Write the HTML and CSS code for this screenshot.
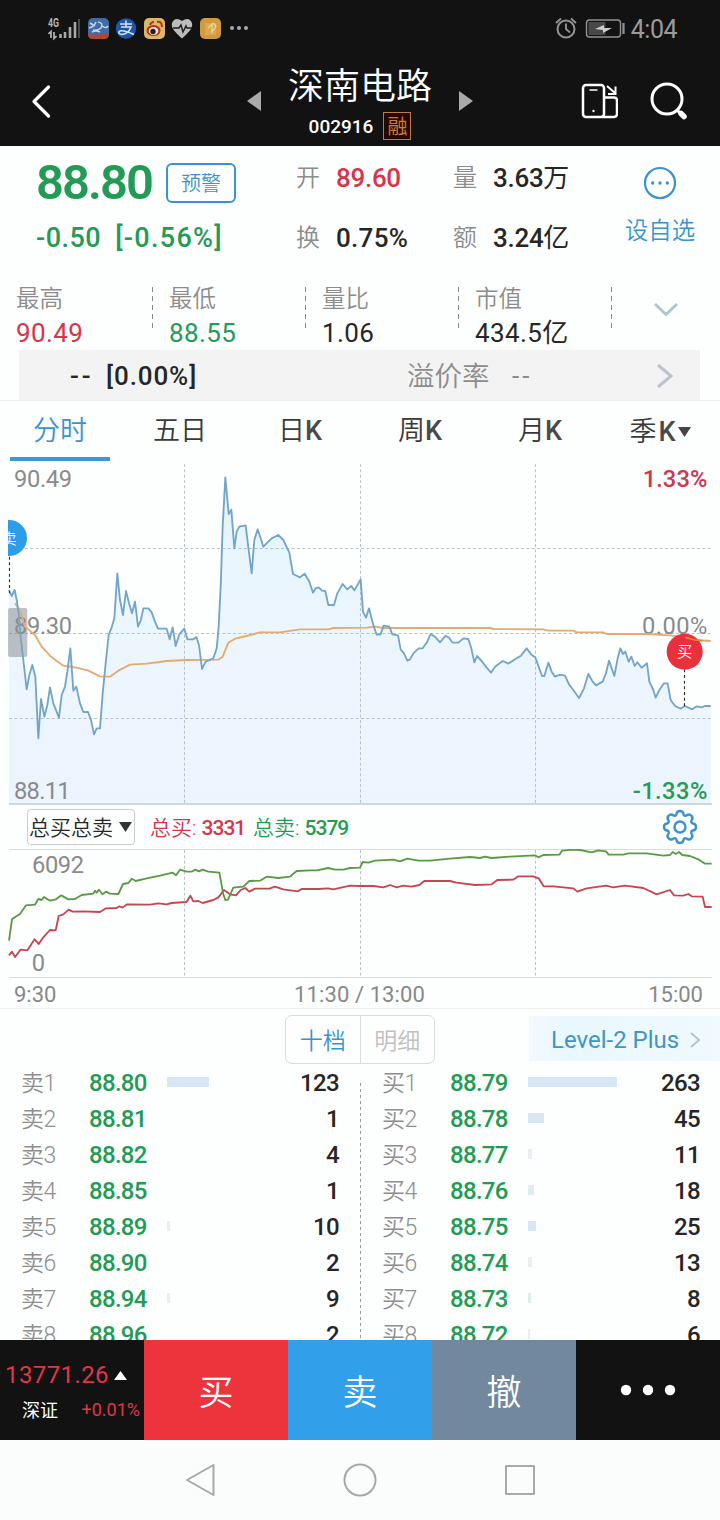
FILE: index.html
```html
<!DOCTYPE html>
<html lang="zh-CN">
<head>
<meta charset="utf-8">
<title>深南电路 002916</title>
<link rel="stylesheet" href="styles.css">
</head>
<body>
<div class="phone">
  <header class="top">
    <div class="status">
      <svg class="status-icons" width="210" height="26" viewBox="0 0 210 26">
        <text x="0" y="9" class="net" textLength="11" lengthAdjust="spacingAndGlyphs">4G</text>
        <path d="M3 20v-6.500l-2.500 2.500M6 14v6.500l2.500-2.500" fill="none" stroke="#b5b5b5" stroke-width="1.700"/>
        <path d="M12.500 20v-4M17 20v-6M22 20v-11M27 20V4" stroke="#a8a8a8" stroke-width="2.600"/>
        <path d="M31 20V1" stroke="#4b4b4b" stroke-width="2"/>
        <rect x="40" y="0" width="21" height="21" rx="5" fill="#416da6"/>
        <path d="M40 16q10 2 21-1v1q0 5-5 5H45q-5 0-5-5z" fill="#b4472f"/>
        <path d="M42 5l5 3M41 10q5-1 7-6M44 14q4-2 8 0M50 4q6 1 3 6q-3 3-8 2M54 8q4 3 6 0" fill="none" stroke="#c3d5e8" stroke-width="1.500"/>
        <circle cx="78" cy="10.500" r="10.200" fill="#1d58a8"/>
        <path d="M72 6h12M78 2.500v6M73 9h10q-3 7.500-9.500 7.500q-3.500-1-2.500-3q3-2.500 15 3" fill="none" stroke="#d5e0ee" stroke-width="1.600"/>
        <rect x="96" y="0" width="21" height="21" rx="5" fill="#dcb766"/>
        <ellipse cx="105.500" cy="12.500" rx="7" ry="5.500" fill="#b33420"/>
        <ellipse cx="105.500" cy="13" rx="4.800" ry="4" fill="#f0e6d8"/>
        <circle cx="105" cy="13.500" r="2.700" fill="#222"/>
        <path d="M109 4q5-1 5 5M102 7q1-3 4-3" fill="none" stroke="#b33420" stroke-width="2"/>
        <path d="M134 20.500C126 13 123 10 124 5q3-7 10-2q7-5 10 2c1 5-2 8-10 15.500z" fill="#bcbcbc"/>
        <path d="M125 10h6l2-3 2 7 3-6 1 2h5" fill="none" stroke="#202020" stroke-width="1.500"/>
        <rect x="152" y="0" width="21" height="21" rx="5" fill="#d09a3e"/>
        <path d="M157 5h11v12h-11z" fill="#dba94f"/>
        <path d="M160 10l4-4v9M165 5l3 3-3 5" fill="none" stroke="#efd59c" stroke-width="1.300"/>
        <g fill="#aaa"><circle cx="184" cy="10" r="2"/><circle cx="191" cy="10" r="2"/><circle cx="198" cy="10" r="2"/></g>
      </svg>
      <div class="status-right">
        <svg width="72" height="26" viewBox="0 0 72 26" fill="none" stroke="#929292">
          <circle cx="12" cy="13" r="8.500" stroke-width="2"/>
          <path d="M12 7.500V13l4 3.500M2 7l5-4.500M17 2.500L22 7" stroke-width="1.900"/>
          <rect x="32.500" y="4" width="34" height="17" rx="3" stroke-width="1.400"/>
          <rect x="34.500" y="6" width="17" height="13" fill="#484848" stroke="none"/>
          <path d="M41 13l9-4v3h8l-9 5v-3z" fill="#ccc" stroke="none"/>
          <path d="M69.500 7v11" stroke-width="2.200"/>
        </svg>
        <span class="clock">4:04</span>
      </div>
    </div>
    <div class="titlebar">
      <svg class="back" width="24" height="38" viewBox="0 0 24 38"><path d="M19.500 5L5 19.500l14.500 14.500" fill="none" stroke="#fff" stroke-width="3.200" stroke-linecap="round" stroke-linejoin="round"/></svg>
      <svg class="prev" width="15" height="22" viewBox="0 0 15 22"><path d="M0 11L14 1v20z" fill="#aaa"/></svg>
      <div class="name">
        <h1>深南电路</h1>
        <div class="code"><span>002916</span><b>融</b></div>
      </div>
      <svg class="next" width="15" height="22" viewBox="0 0 15 22"><path d="M15 11L1 1v20z" fill="#aaa"/></svg>
      <svg class="rotate" width="38" height="38" viewBox="0 0 38 38" fill="none" stroke="#fff" stroke-width="2.500">
        <rect x="3" y="3" width="21" height="32" rx="3"/>
        <path d="M24 15.500h10q3 0 3 3v13.500q0 3-3 3H22"/>
        <path d="M27 4l8 7M35.500 4.500V12h-7.500" stroke-width="2"/>
        <path d="M9.500 8h8" stroke-width="1.500"/><circle cx="13.500" cy="29" r="1.200" fill="#fff" stroke="none"/>
      </svg>
      <svg class="search" width="38" height="40" viewBox="0 0 38 40" fill="none" stroke="#fff"><circle cx="17" cy="18" r="15" stroke-width="3"/><path d="M27 29l3 3" stroke-width="3"/><path d="M31 32.500l3 3" stroke-width="5.500" stroke-linecap="round"/></svg>
    </div>
  </header>

  <section class="quote">
    <div class="main">
      <div class="left">
        <div class="price-row"><span class="price">88.80</span><span class="alert">预警</span></div>
        <div class="change"><span>-0.50</span><span>[-0.56%]</span></div>
      </div>
      <dl class="pairs">
        <dt>开</dt><dd class="red">89.60</dd><dt>量</dt><dd>3.63<i>万</i></dd>
        <dt>换</dt><dd class="wide">0.75%</dd><dt>额</dt><dd>3.24<i>亿</i></dd>
      </dl>
      <div class="fav">
        <svg width="34" height="34" viewBox="0 0 34 34"><circle cx="17" cy="17" r="15" fill="none" stroke="#3b93ce" stroke-width="2.200"/><g fill="#3b93ce"><circle cx="9.700" cy="17" r="1.700"/><circle cx="17" cy="17" r="1.700"/><circle cx="24.300" cy="17" r="1.700"/></g></svg>
        <span>设自选</span>
      </div>
    </div>
    <div class="stats">
      <div class="stat"><span>最高</span><b class="red">90.49</b></div>
      <div class="stat"><span>最低</span><b class="green">88.55</b></div>
      <div class="stat"><span>量比</span><b>1.06</b></div>
      <div class="stat"><span>市值</span><b>434.5亿</b></div>
      <svg class="expand" width="26" height="16" viewBox="0 0 26 16"><path d="M2 2l11 10.500L24 2" fill="none" stroke="#b5c3cc" stroke-width="3"/></svg>
    </div>
    <div class="premium">
      <span class="dash">--</span><span class="pct">[0.00%]</span><span class="lab">溢价率</span><span class="none">--</span>
      <svg width="18" height="28" viewBox="0 0 18 28"><path d="M2 3l13 11L2 25" fill="none" stroke="#bec2d0" stroke-width="3"/></svg>
    </div>
  </section>

  <nav class="tabs">
    <span class="on">分时</span><span>五日</span><span>日<b>K</b></span><span>周<b>K</b></span><span>月<b>K</b></span>
    <span class="drop">季<b>K</b><svg width="13" height="10" viewBox="0 0 13 10"><path d="M0 0h13L6.500 10z" fill="#454545"/></svg></span>
  </nav>

  <svg class="chart" width="720" height="347" viewBox="0 183 2160 1041">
    <defs><linearGradient id="area" x1="0" y1="0" x2="0" y2="1"><stop offset="0" stop-color="#e2f5fd"/><stop offset=".5" stop-color="#edf6fd"/><stop offset="1" stop-color="#ecf5fd"/></linearGradient></defs>
    <path fill="url(#area)" d="M27 1211L27,570 35,588 44,570 50,600 56,640 62,710 70,780 80,868 88,825 97,795 106,830 115,1015 123,897 133,950 142,915 150,862 160,910 177,953 185,885 195,860 202,815 211,745 220,872 229,860 240,910 250,936 264,936 273,960 282,1003 290,985 300,985 308,880 317,790 326,705 335,682 343,655 352,520 360,600 369,645 378,573 387,610 396,640 405,605 414,680 422,662 430,625 445,625 455,637 465,665 474,686 500,686 509,718 518,682 527,738 538,703 553,686 562,718 580,718 589,711 597,735 606,807 617,785 640,775 650,745 656,680 662,560 668,380 676,232 686,342 694,329 703,445 710,395 718,380 737,376 746,450 755,520 763,420 773,388 782,415 790,440 815,415 835,405 850,420 868,458 879,522 900,532 914,521 928,545 939,578 947,565 956,562 966,572 976,573 985,615 1002,615 1012,580 1028,552 1042,568 1054,558 1063,571 1082,538 1089,635 1098,653 1107,625 1120,675 1130,704 1141,704 1151,677 1168,680 1177,703 1194,706 1202,748 1212,760 1222,782 1230,778 1240,760 1256,745 1268,745 1282,725 1292,702 1305,710 1320,727 1337,707 1348,714 1358,728 1375,728 1390,715 1405,717 1414,745 1423,787 1431,768 1445,783 1460,803 1473,818 1485,800 1508,783 1525,791 1545,778 1563,767 1580,745 1595,765 1606,772 1626,828 1633,828 1645,788 1655,815 1665,830 1680,824 1695,827 1707,853 1720,870 1737,894 1752,865 1765,822 1778,845 1788,856 1808,845 1818,820 1827,782 1843,828 1853,775 1861,745 1869,762 1876,755 1886,785 1894,770 1904,798 1912,787 1925,803 1941,790 1948,845 1960,870 1967,893 1978,870 1992,850 2003,850 2012,900 2025,918 2042,926 2054,918 2077,928 2090,919 2105,922 2115,918 2132,918L2132 1211z"/>
    <path d="M27 445.500H2136M27 700.500H2136M27 955.500H2136M553.500 192V1210M1081.500 192V1210M1606.500 192V1210" class="grid-line"/>
    <path d="M27 1212H2136" stroke="#c0cccf" stroke-width="5"/>
    <rect x="24" y="624" width="58" height="147" rx="6" fill="#777b82" fill-opacity=".45"/>
    <g class="axis">
      <text x="42" y="262" textLength="174">90.49</text>
      <text x="42" y="702" textLength="174">89.30</text>
      <text x="42" y="1197" textLength="170">88.11</text>
      <text x="1928" y="262" textLength="194" class="t-red">1.33%</text>
      <text x="1926" y="702" textLength="196">0.00%</text>
      <text x="1898" y="1197" textLength="224" class="t-green">-1.33%</text>
    </g>
    <polyline class="avg" points="45,610 60,630 75,680 105,705 125,740 155,772 190,797 230,803 265,812 300,829 330,830 355,812 390,794 440,791 500,783 560,780 655,779 668,770 685,728 705,716 740,708 780,697 840,697 900,688 985,688 1000,684 1100,683 1125,680 1150,684 1470,684 1480,687 1630,688 1645,692 1720,692 1730,697 1810,697 1820,702 1940,702 2010,706 2055,712 2085,720 2132,723"/>
    <polyline class="line" points="27,570 35,588 44,570 50,600 56,640 62,710 70,780 80,868 88,825 97,795 106,830 115,1015 123,897 133,950 142,915 150,862 160,910 177,953 185,885 195,860 202,815 211,745 220,872 229,860 240,910 250,936 264,936 273,960 282,1003 290,985 300,985 308,880 317,790 326,705 335,682 343,655 352,520 360,600 369,645 378,573 387,610 396,640 405,605 414,680 422,662 430,625 445,625 455,637 465,665 474,686 500,686 509,718 518,682 527,738 538,703 553,686 562,718 580,718 589,711 597,735 606,807 617,785 640,775 650,745 656,680 662,560 668,380 676,232 686,342 694,329 703,445 710,395 718,380 737,376 746,450 755,520 763,420 773,388 782,415 790,440 815,415 835,405 850,420 868,458 879,522 900,532 914,521 928,545 939,578 947,565 956,562 966,572 976,573 985,615 1002,615 1012,580 1028,552 1042,568 1054,558 1063,571 1082,538 1089,635 1098,653 1107,625 1120,675 1130,704 1141,704 1151,677 1168,680 1177,703 1194,706 1202,748 1212,760 1222,782 1230,778 1240,760 1256,745 1268,745 1282,725 1292,702 1305,710 1320,727 1337,707 1348,714 1358,728 1375,728 1390,715 1405,717 1414,745 1423,787 1431,768 1445,783 1460,803 1473,818 1485,800 1508,783 1525,791 1545,778 1563,767 1580,745 1595,765 1606,772 1626,828 1633,828 1645,788 1655,815 1665,830 1680,824 1695,827 1707,853 1720,870 1737,894 1752,865 1765,822 1778,845 1788,856 1808,845 1818,820 1827,782 1843,828 1853,775 1861,745 1869,762 1876,755 1886,785 1894,770 1904,798 1912,787 1925,803 1941,790 1948,845 1960,870 1967,893 1978,870 1992,850 2003,850 2012,900 2025,918 2042,926 2054,918 2077,928 2090,919 2105,922 2115,918 2132,918"/>
    <path d="M28.500 470V580M2053.500 808V920" stroke="#333" stroke-width="3.500" stroke-dasharray="9 8"/>
    <clipPath id="left-edge"><rect x="24" y="340" width="100" height="150"/></clipPath>
    <g clip-path="url(#left-edge)"><circle cx="27" cy="414" r="54" fill="#2d9ce9"/><text x="27" y="431" class="mark">卖</text></g>
    <circle cx="2054" cy="755" r="54" fill="#e8313a"/><text x="2054" y="772" class="mark">买</text>
    <path d="M2056 712L2085 720 2108 722" fill="none" stroke="#e3853c" stroke-width="5"/>
  </svg>

  <div class="sub-head">
    <div class="select"><span>总买总卖</span><svg width="13" height="10" viewBox="0 0 13 10"><path d="M0 0h13L6.500 10z" fill="#333"/></svg></div>
    <span class="sum red">总买: <b>3331</b></span><span class="sum green">总卖: <b>5379</b></span>
    <svg class="gear" width="36" height="36" viewBox="0 0 36 36" fill="none" stroke="#3b93ce" stroke-width="2.400" stroke-linejoin="round">
      <path d="M14.500 5Q15 2 18 2T21.500 5Q22 7.500 24.500 6.500Q27 4.500 29.300 6.700T29.500 11.500Q28.500 14 31 14.500Q34 15 34 18T31 21.500Q28.500 22 29.500 24.500Q31.500 27 29.300 29.300T24.500 29.500Q22 28.500 21.500 31Q21 34 18 34T14.500 31Q14 28.500 11.500 29.500Q9 31.500 6.700 29.300T6.500 24.500Q7.500 22 5 21.500Q2 21 2 18T5 14.500Q7.500 14 6.500 11.500Q4.500 9 6.700 6.700T11.500 6.500Q14 7.500 14.500 5z"/><circle cx="18" cy="18" r="5.500"/>
    </svg>
  </div>
  <svg class="sub-chart" width="720" height="129" viewBox="0 147 2160 387">
    <path d="M27 148.500H2136M27 532.500H2136" stroke="#dcdcdc" stroke-width="3"/>
    <path d="M553.500 150V532M1081.500 150V532M1606.500 150V532" class="grid-line"/>
    <g class="axis"><text x="96" y="218" textLength="156">6092</text><text x="95" y="514">0</text></g>
    <polyline class="buy" points="27,466 36,455 45,471 62,449 82,451 104,418 116,432 130,412 150,390 167,391 176,348 190,343 206,329 218,335 250,334 300,336 318,325 350,324 358,319 368,323 380,313 450,314 475,310 500,313 515,309 560,306 571,287 580,304 595,303 608,309 640,300 655,292 672,270 690,283 708,286 722,270 736,264 748,275 765,266 808,266 825,260 850,268 893,274 905,267 955,267 985,265 1000,268 1050,257 1080,258 1120,258 1150,262 1170,255 1190,262 1210,257 1235,260 1258,255 1273,243 1350,243 1370,248 1425,255 1475,253 1492,240 1540,239 1555,229 1600,229 1617,236 1631,259 1660,259 1690,262 1720,265 1732,275 1760,265 1818,257 1840,262 1875,257 1930,264 1970,283 2010,270 2022,286 2050,287 2065,282 2075,289 2108,290 2115,321 2135,321"/>
    <polyline class="sell" points="27,422 36,358 50,348 60,342 78,316 105,314 115,297 125,300 132,291 150,302 168,298 184,286 205,298 225,297 245,285 280,281 285,272 290,278 297,269 307,283 318,275 330,281 355,282 369,252 385,249 396,236 407,243 440,235 480,227 518,218 528,226 540,209 560,215 575,215 585,209 597,214 608,209 625,215 658,218 670,283 676,300 684,299 700,263 730,260 748,243 780,242 800,230 835,234 870,230 890,213 930,211 950,211 985,204 1005,209 1030,209 1050,204 1080,203 1088,186 1105,188 1125,182 1180,179 1200,184 1222,176 1255,182 1290,182 1350,176 1410,171 1440,174 1455,170 1475,174 1530,170 1605,166 1615,172 1630,165 1678,164 1686,152 1720,149 1740,150 1775,157 1795,151 1818,154 1826,164 1870,164 1885,160 1940,160 1990,167 2010,165 2018,156 2027,162 2037,156 2047,165 2070,168 2095,178 2115,191 2135,191"/>
  </svg>
  <div class="times"><span>9:30</span><span class="mid">11:30 / 13:00</span><span>15:00</span></div>

  <section class="book">
    <div class="book-head">
      <div class="seg"><span class="on">十档</span><span>明细</span></div>
      <div class="level">Level-2 Plus<svg width="12" height="18" viewBox="0 0 12 18"><path d="M2 2l8 7-8 7" fill="none" stroke="#b3c6cc" stroke-width="2"/></svg></div>
    </div>
    <div class="sides">
      <div class="side">
        <div class="row"><span>卖1</span><b>88.80</b><i style="width:42px"></i><em>123</em></div>
        <div class="row"><span>卖2</span><b>88.81</b><em>1</em></div>
        <div class="row"><span>卖3</span><b>88.82</b><em>4</em></div>
        <div class="row"><span>卖4</span><b>88.85</b><em>1</em></div>
        <div class="row"><span>卖5</span><b>88.89</b><i class="faint" style="width:3px"></i><em>10</em></div>
        <div class="row"><span>卖6</span><b>88.90</b><em>2</em></div>
        <div class="row"><span>卖7</span><b>88.94</b><i class="faint" style="width:3px"></i><em>9</em></div>
        <div class="row"><span>卖8</span><b>88.96</b><em>2</em></div>
      </div>
      <div class="side buy-side">
        <div class="row"><span>买1</span><b>88.79</b><i style="width:89px"></i><em>263</em></div>
        <div class="row"><span>买2</span><b>88.78</b><i style="width:16px"></i><em>45</em></div>
        <div class="row"><span>买3</span><b>88.77</b><i class="faint" style="width:4px"></i><em>11</em></div>
        <div class="row"><span>买4</span><b>88.76</b><i class="mint" style="width:6px"></i><em>18</em></div>
        <div class="row"><span>买5</span><b>88.75</b><i style="width:8px"></i><em>25</em></div>
        <div class="row"><span>买6</span><b>88.74</b><i class="faint" style="width:4px"></i><em>13</em></div>
        <div class="row"><span>买7</span><b>88.73</b><i class="mint" style="width:3px"></i><em>8</em></div>
        <div class="row"><span>买8</span><b>88.72</b><i class="faint" style="width:2px"></i><em>6</em></div>
      </div>
    </div>
  </section>

  <footer class="actions">
    <div class="index">
      <div class="idx-val"><span>13771.26</span><svg width="13" height="9" viewBox="0 0 13 9"><path d="M0 9h13L6.500 0z" fill="#fff"/></svg></div>
      <div class="idx-sub"><span>深证</span><b>+0.01%</b></div>
    </div>
    <div class="act buy-btn">买</div><div class="act sell-btn">卖</div><div class="act cancel-btn">撤</div>
    <div class="act more"><svg width="56" height="12" viewBox="0 0 56 12" fill="#fff"><circle cx="6" cy="6" r="5.200"/><circle cx="28" cy="6" r="5.200"/><circle cx="50" cy="6" r="5.200"/></svg></div>
  </footer>
  <div class="sysnav">
    <svg width="352" height="36" viewBox="0 0 352 36" fill="none" stroke="#a8a8a8" stroke-width="2" stroke-linejoin="round"><path d="M29.500 3v30L3 18z"/><circle cx="176" cy="18" r="15.500"/><rect x="322" y="4" width="28" height="28"/></svg>
  </div>
</div>
</body>
</html>
```
FILE: styles.css
```css
* { box-sizing: border-box; margin: 0; padding: 0; }
body { background: #fdfefe; font-family: Roboto, "Noto Sans CJK SC", sans-serif; line-height: 1; color: #262626; }
svg { display: block; flex: none; }
b, i, em { font-style: normal; font-weight: 400; }
span { white-space: nowrap; }
.phone { width: 720px; height: 1520px; display: flex; flex-direction: column; overflow: hidden; }
.red { color: #d8344a !important; }
.green { color: #249b55 !important; }

.top { height: 146px; background: #121212; color: #fff; display: flex; flex-direction: column; }
.status { height: 58px; display: flex; justify-content: space-between; padding: 18px 43px 0 48px; }
.net { font-size: 12px; font-weight: 700; fill: #b5b5b5; }
.status-right { display: flex; gap: 5px; height: 26px; margin-top: -2px; }
.clock { font-size: 25px; color: #9b9b9b; line-height: 27px; letter-spacing: -.5px; }
.titlebar { height: 88px; display: flex; align-items: flex-start; }
.back { margin: 24px 0 0 29px; }
.prev { margin: 32px 0 0 194px; }
.name { width: 196px; height: 88px; display: flex; flex-direction: column; align-items: center; }
.name h1 { font-size: 36px; font-weight: 350; line-height: 52px; height: 53px; padding-top: 3px; }
.code { display: flex; gap: 10px; height: 30px; align-items: center; font-size: 19px; font-weight: 500; }
.code b { width: 28px; height: 28px; border: 1px solid #c07b42; background: #250900; color: #d57a35; font-size: 20px; line-height: 29px; text-align: center; }
.next { margin: 32px 0 0 0; }
.rotate { margin: 24px 0 0 107px; }
.search { margin: 23px 0 0 32px; }

.quote { height: 255px; border-bottom: 1px solid #eee; }
.main { height: 134px; display: flex; }
.left { width: 296px; padding-left: 36px; }
.price-row { display: flex; align-items: center; height: 73px; gap: 13px; }
.price { font-size: 49px; font-weight: 600; letter-spacing: -2px; color: #249b55; width: 117px; }
.alert { width: 70px; height: 40px; border: 2px solid #3b93ce; border-radius: 6px; color: #3b93ce; font-size: 20px; font-weight: 350; line-height: 39px; text-align: center; }
.change { display: flex; gap: 14px; height: 37px; align-items: center; font-size: 27px; font-weight: 500; color: #249b55; padding-top: 1px; letter-spacing: .5px; }
.change span + span { letter-spacing: 1.300px; }
.pairs { display: grid; grid-template-columns: 40px 117px 40px 122px; grid-template-rows: 60px 60px; align-items: center; height: 120px; padding-top: 1px; font-size: 26px; }
.pairs dt { font-size: 24px; font-weight: 350; color: #8c8c8c; padding-top: 2px; }
.pairs dd { font-weight: 500; letter-spacing: -.3px; padding-top: 1px; }
.pairs .wide { letter-spacing: .3px; }
.fav { width: 90px; padding-top: 20px; display: flex; flex-direction: column; align-items: center; gap: 20px; color: #3b93ce; font-size: 23.500px; font-weight: 350; }
.stats { display: flex; height: 70px; padding-left: 16px; }
.stat { width: 153px; height: 69px; display: flex; flex-direction: column; background: repeating-linear-gradient(#888 0 5px, transparent 5px 9px) 136px 7px / 1px 43px no-repeat; }
.stat span { height: 36px; line-height: 39px; font-size: 23.500px; font-weight: 350; color: #8c8c8c; }
.stat b { font-size: 26px; line-height: 34px; height: 34px; letter-spacing: .4px; }
.expand { margin: 22px 0 0 25px; }
.premium { margin-left: 19px; width: 681px; height: 50px; background: #f3f3f3; display: flex; align-items: center; font-size: 26px; padding-top: 2px; }
.dash { width: 87px; padding-left: 51px; font-weight: 500; letter-spacing: 3px; }
.pct { width: 301px; font-weight: 500; letter-spacing: .9px; }
.lab { width: 105px; color: #8c8c8c; font-weight: 350; font-size: 27.500px; padding-top: 2px; }
.none { width: 144px; color: #8c8c8c; letter-spacing: 3px; }

.tabs { height: 60px; display: grid; grid-template-columns: repeat(6, 120px); }
.tabs span { margin: 0 10px; text-align: center; font-size: 27px; font-weight: 350; line-height: 60px; height: 60px; color: #3a3a3a; }
.tabs b { font-weight: 500; color: #4a4a4a; }
.tabs .on { color: #3b93ce; border-bottom: 4px solid #3d9bcb; }
.tabs .drop { display: flex; align-items: center; justify-content: center; gap: 2px; padding-top: 2px; }

.grid-line { stroke: #b8c3c8; stroke-width: 3; stroke-dasharray: 9 7; }
.axis { font-size: 71px; fill: #8a8a8a; }
.t-red { fill: #cf3650; font-weight: 500; }
.t-green { fill: #249b55; font-weight: 500; }
.avg, .line, .buy, .sell { fill: none; stroke-width: 5.500; stroke-linejoin: round; }
.avg { stroke: #e3aa72; }
.line { stroke: #72a5c8; }
.buy { stroke: #c74453; }
.sell { stroke: #5a9a45; }
.mark { font-size: 46px; fill: #fff; text-anchor: middle; font-weight: 350; }

.sub-head { height: 41px; display: flex; align-items: center; padding: 0 0 4px 27px; font-size: 21px; font-weight: 350; }
.sum { margin-right: 9px; width: 94px; padding-top: 3px; }
.sub-head b { font-weight: 500; letter-spacing: -1px; }
.select { width: 108px; height: 36px; border: 1px solid #ccc; border-radius: 4px; margin-right: 15px; display: flex; align-items: center; gap: 6px; padding-left: 1px; }
.select span { padding-top: 3px; }
.gear { margin-left: 306px; }
.times { height: 31px; border-bottom: 1px solid #efefef; display: grid; grid-template-columns: 1fr auto 1fr; align-items: center; padding: 3px 17px 0 14px; font-size: 22px; color: #888; }
.times span:last-child { text-align: right; }
.mid { letter-spacing: .1px; padding-left: 2px; }

.book { height: 331px; overflow: hidden; }
.book-head { height: 56px; display: flex; padding: 6px 0 0 285px; }
.seg { width: 150px; height: 49px; display: flex; border: 1px solid #dcdcdc; border-radius: 7px; color: #c0c0c0; font-size: 23px; font-weight: 350; }
.seg span { flex: 1; text-align: center; line-height: 51px; height: 47px; }
.seg .on { color: #3b93ce; border-right: 1px solid #dcdcdc; }
.level { margin: 1px 0 0 94px; width: 191px; height: 45px; background: linear-gradient(90deg, #f3f9ff, #e9f8fe 20%, #f0faff); display: flex; align-items: center; gap: 10px; padding: 2px 0 0 22px; font-size: 24px; color: #4494c2; white-space: nowrap; }
.sides { display: grid; grid-template-columns: 360px 360px; background: repeating-linear-gradient(#999 0 3px, transparent 3px 6px) 360px 18px / 1px 300px no-repeat; }
.side { padding: 0 21px 0 21px; }
.buy-side { padding: 0 20px 0 22px; }
.row { height: 36px; display: flex; align-items: center; font-size: 24px; }
.row span { width: 68px; color: #8e8e8e; font-size: 23px; font-weight: 350; letter-spacing: -.5px; padding-top: 1px; }
.row b { width: 78px; color: #249b55; font-weight: 500; letter-spacing: -.7px; }
.row i { height: 10px; background: #d8e7f5; margin-top: -2px; }
.row .faint { background: #e9edf4; }
.row .mint { background: #dcefee; }
.row em { margin-left: auto; font-weight: 500; letter-spacing: -.6px; }

.actions { height: 100px; flex: none; display: grid; grid-template-columns: repeat(5, 144px); background: #121212; color: #fff; }
.index { padding: 20px 0 0 5px; }
.idx-val { display: flex; align-items: center; gap: 5px; height: 30px; color: #e0354a; font-size: 24px; letter-spacing: .4px; }
.idx-sub { display: flex; justify-content: space-between; align-items: center; height: 40px; padding: 0 4px 0 17px; font-size: 18px; }
.idx-sub span { padding-top: 2px; }
.idx-sub b { color: #e0354a; }
.act { display: flex; align-items: center; justify-content: center; font-size: 35px; font-weight: 350; padding-top: 6px; }
.more { padding: 0 0 1px; }
.buy-btn { background: #ed333b; }
.sell-btn { background: #329fea; }
.cancel-btn { background: #72889f; }
.sysnav { height: 80px; flex: none; background: #fbfdfc; display: flex; justify-content: center; align-items: center; }
```
